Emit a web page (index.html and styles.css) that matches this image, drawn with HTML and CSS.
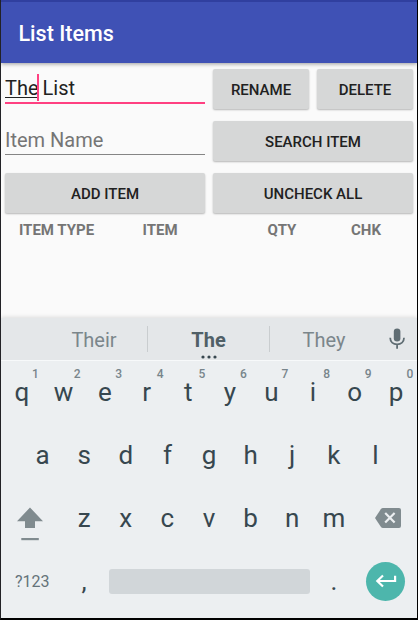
FILE: index.html
```html
<!DOCTYPE html>
<html lang="en">
<head>
<meta charset="utf-8">
<title>List Items</title>
<link rel="stylesheet" href="styles.css">
</head>
<body>
<div class="screen">
  <header class="appbar"><h1>List Items</h1></header>
  <main class="content">
    <div class="form">
      <div class="field focused"><span class="composing">The</span><i class="caret"></i><span class="rest">&nbsp;List</span></div>
      <div class="pair"><button>RENAME</button><button>DELETE</button></div>
      <div class="field hint">Item Name</div>
      <button>SEARCH ITEM</button>
      <button>ADD ITEM</button>
      <button>UNCHECK ALL</button>
    </div>
    <div class="heads"><span>ITEM TYPE</span><span>ITEM</span><span>QTY</span><span>CHK</span></div>
  </main>
  <section class="keyboard">
    <div class="suggest">
      <span class="word first">Their</span>
      <span class="word best">The<svg class="dots" width="16" height="4" viewBox="0 0 16 4"><circle cx="2" cy="2" r="1.6"/><circle cx="8" cy="2" r="1.6"/><circle cx="14" cy="2" r="1.6"/></svg></span>
      <span class="word last">They</span>
      <svg class="mic" width="16" height="22" viewBox="0 0 16 22"><rect x="4.8" y="0.5" width="6.6" height="13" rx="3.3"/><path d="M1.2 9.8c0 4 3 6.6 6.9 6.6s6.9-2.6 6.9-6.6M8.1 16.4v4.3"/></svg>
    </div>
    <div class="row">
      <span class="key">q<sup>1</sup></span><span class="key">w<sup>2</sup></span><span class="key">e<sup>3</sup></span><span class="key">r<sup>4</sup></span><span class="key">t<sup>5</sup></span><span class="key">y<sup>6</sup></span><span class="key">u<sup>7</sup></span><span class="key">i<sup>8</sup></span><span class="key">o<sup>9</sup></span><span class="key">p<sup>0</sup></span>
    </div>
    <div class="row">
      <span class="key">a</span><span class="key">s</span><span class="key">d</span><span class="key">f</span><span class="key">g</span><span class="key">h</span><span class="key">j</span><span class="key">k</span><span class="key">l</span>
    </div>
    <div class="row">
      <span class="side"><svg class="shift" width="26" height="34" viewBox="0 0 26 34"><path d="M13 0.5 26 14.3H18V21H8V14.3H0Z"/><rect x="4.3" y="31" width="17.5" height="2.2"/></svg></span>
      <span class="key">z</span><span class="key">x</span><span class="key">c</span><span class="key">v</span><span class="key">b</span><span class="key">n</span><span class="key">m</span>
      <span class="side"><svg class="erase" width="26" height="20" viewBox="0 0 26 20"><path class="tag" d="M8 0H24a2 2 0 0 1 2 2V18a2 2 0 0 1-2 2H8Q6.600 20 5.800 18.800L0 10 5.800 1.200Q6.600 0 8 0Z"/><path class="cross" d="M10.200 5 19.600 14.600M19.600 5 10.200 14.600"/></svg></span>
    </div>
    <div class="row">
      <span class="side mode">?123</span>
      <span class="key">,</span>
      <span class="spacebar"></span>
      <span class="key">.</span>
      <span class="side"><span class="enter"><svg width="22" height="14" viewBox="0 0 22 14"><path d="M20.100 1.700V7H2.500M8 1.500 2.300 7 8 12.500"/></svg></span></span>
    </div>
  </section>
</div>
</body>
</html>
```
FILE: styles.css
```css
* { box-sizing: border-box; }
body { margin: 0; background: #000; font-family: Roboto, sans-serif; }
.screen {
  width: 418px; height: 620px;
  display: flex; flex-direction: column;
  border: solid #000; border-width: 0 1px 2px;
  border-left-color: #222226;
  background: #fafafa;
  overflow: hidden;
}
.appbar {
  flex: none; height: 63px;
  display: flex; align-items: center;
  padding: 2px 0 0 17.500px;
  border-top: 2px solid #303f9f;
  background: #3f51b5;
  box-shadow: 0 1px 4px rgba(0,0,0,.38);
}
h1 { margin: 0; color: #fff; font-size: 21.500px; font-weight: 500; line-height: 26px; }
.content { flex: 1; padding: 6px 4px 0; }
.form { display: grid; grid-template-columns: 200px 200px; grid-auto-rows: 39.500px; gap: 12.500px 8px; }
.pair { display: grid; grid-template-columns: 96px 96px; gap: 8px; }
button {
  border: 0; padding: 2px 0 0; border-radius: 2px;
  background: #d6d7d7; color: #212121;
  font: 500 15px Roboto, sans-serif;
  box-shadow: 0 1px 2px rgba(0,0,0,.28);
}
.field {
  display: flex; align-items: center;
  height: 35px;
  color: #212121; font-size: 20px;
  border-bottom: 2px solid #ff4081;
}
.focused { padding-top: 4px; }
.composing { line-height: 20px; margin-top: 1px; box-shadow: 0 -1px 0 #212121 inset; }
.caret { width: 2px; height: 27px; background: #ff4081; margin: 0 -1px 0 -2px; }
.rest { margin-left: 0; }
.hint { height: 34px; padding-top: 5px; color: #757575; border-bottom: 1px solid #858585; }
.heads {
  display: grid; grid-template-columns: 103px 104px 140px 28px;
  margin-top: 8px; color: #757575;
  font-size: 15px; font-weight: 700; line-height: 18px; text-align: center;
}
.heads span { justify-self: center; white-space: nowrap; }
.heads span:last-child { margin: 0 -10px; }
.keyboard {
  flex: none; height: 300px; padding-bottom: 5px;
  display: flex; flex-direction: column;
  background: #eceff1; color: #37474f;
  box-shadow: 0 -1px 4px rgba(0,0,0,.12);
}
.suggest {
  flex: none; height: 43px; margin-bottom: -1px;
  display: flex; align-items: center;
  background: #e4e7e9; border-bottom: 1px solid #f7f9fa;
}
.word {
  position: relative;
  width: 122px; height: 26px; line-height: 28px;
  text-align: center; font-size: 20px; color: #7b868b;
}
.first { width: 147px; padding-left: 40px; border-right: 1px solid #c9cdcf; }
.best { font-weight: 700; color: #506067; border-right: 1px solid #c9cdcf; }
.last { width: 110px; padding-right: 2px; }
.dots { position: absolute; left: 53px; top: 29px; fill: #37474f; }
.mic { margin-left: 9px; fill: #5f6d73; }
.mic path { fill: none; stroke: #5f6d73; stroke-width: 1.800; }
.row { flex: 1; display: flex; align-items: center; justify-content: center; }
.key {
  position: relative; width: 41.600px;
  text-align: center; font-size: 26px; line-height: 30px;
}
.key sup {
  position: absolute; left: 31px; top: -10px;
  font-size: 12px; line-height: 14px; font-weight: 500; color: #78858b;
}
.side { width: 62.400px; height: 40px; display: flex; align-items: center; justify-content: center; }
.shift { fill: #808b8f; margin-top: 11px; margin-right: 4px; }
.erase { margin-left: 4px; }
.tag { fill: #808b8f; }
.cross { fill: none; stroke: #eceff1; stroke-width: 2.200; }
.mode { font-size: 16px; color: #65737a; }
.spacebar { width: 201px; height: 25px; margin: 0 3.300px 0 4.300px; border-radius: 3px; background: #d1d6d9; }
.enter {
  width: 39px; height: 39px; border-radius: 50%;
  display: flex; align-items: center; justify-content: center;
  background: #4db6ac;
}
.enter svg { fill: none; stroke: #fff; stroke-width: 2.200; }
```
